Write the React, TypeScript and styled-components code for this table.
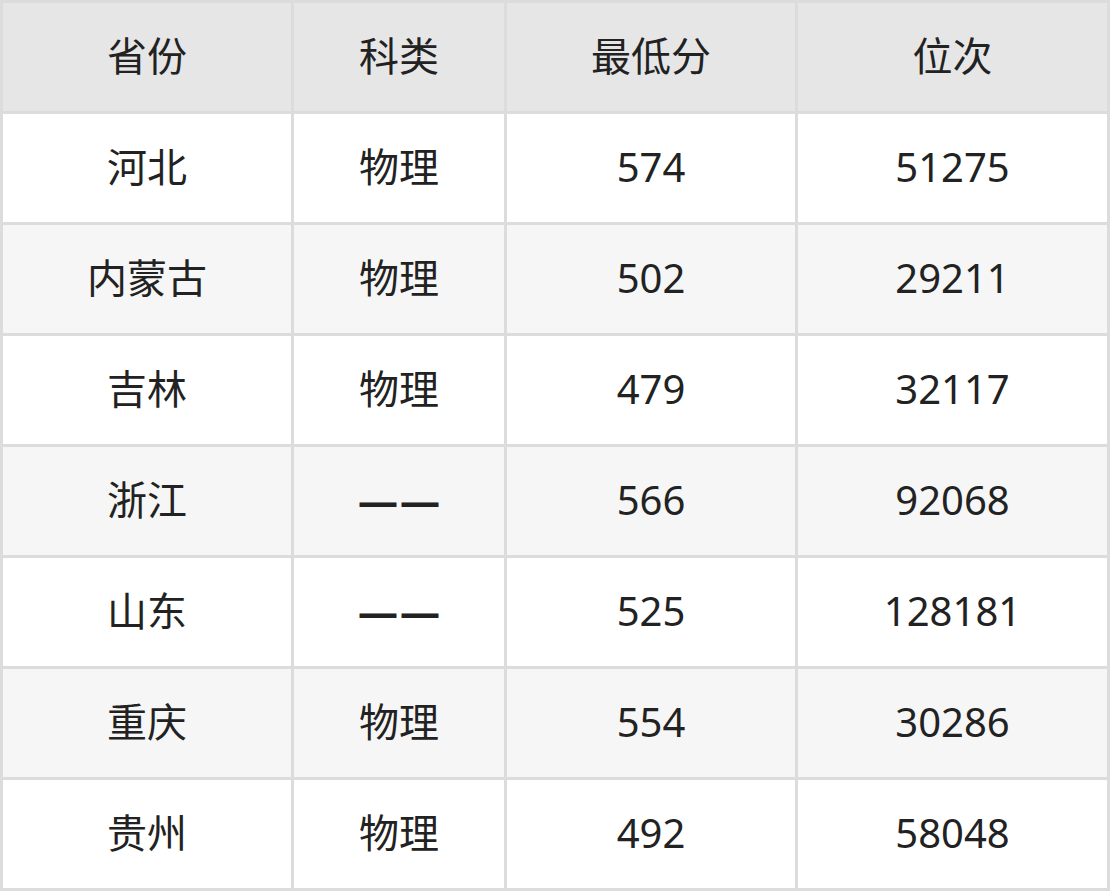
import styled, { createGlobalStyle } from "styled-components";

const GlobalStyle = createGlobalStyle`
  html, body {
    margin: 0;
    padding: 0;
    background: #fff;
  }
`;

const headers = ["省份", "科类", "最低分", "位次"];

const rows = [
  ["河北", "物理", "574", "51275"],
  ["内蒙古", "物理", "502", "29211"],
  ["吉林", "物理", "479", "32117"],
  ["浙江", "——", "566", "92068"],
  ["山东", "——", "525", "128181"],
  ["重庆", "物理", "554", "30286"],
  ["贵州", "物理", "492", "58048"],
];

const Table = styled.div`
  display: grid;
  grid-template-columns: 288px 210px 288px 309px;
  grid-auto-rows: 108px;
  gap: 3px;
  padding: 3px;
  width: 1110px;
  box-sizing: border-box;
  background: #dcdcdc;
  font-family: "Noto Sans", "Noto Sans CJK SC", sans-serif;
  color: #222;
`;

const Cell = styled.div<{ $head?: boolean; $alt?: boolean }>`
  display: flex;
  align-items: center;
  justify-content: center;
  padding-bottom: 3px;
  box-sizing: border-box;
  font-size: 40px;
  line-height: 1;
  background: ${(p) => (p.$head ? "#e6e6e6" : p.$alt ? "#f6f6f6" : "#fff")};
`;

// empty subject: two heavy dashes with a small gap
const Dash = styled.span`
  font-weight: 700;
  letter-spacing: 2px;
  margin-right: -2px;
`;

function App() {
  return (
    <>
      <GlobalStyle />
      <Table>
        {headers.map((h) => (
          <Cell key={h} $head>
            {h}
          </Cell>
        ))}
        {rows.map((r, i) =>
          r.map((v, j) => (
            <Cell key={`${i}-${j}`} $alt={i % 2 === 1}>
              {v === "——" ? <Dash>{v}</Dash> : v}
            </Cell>
          ))
        )}
      </Table>
    </>
  );
}

export default App;
